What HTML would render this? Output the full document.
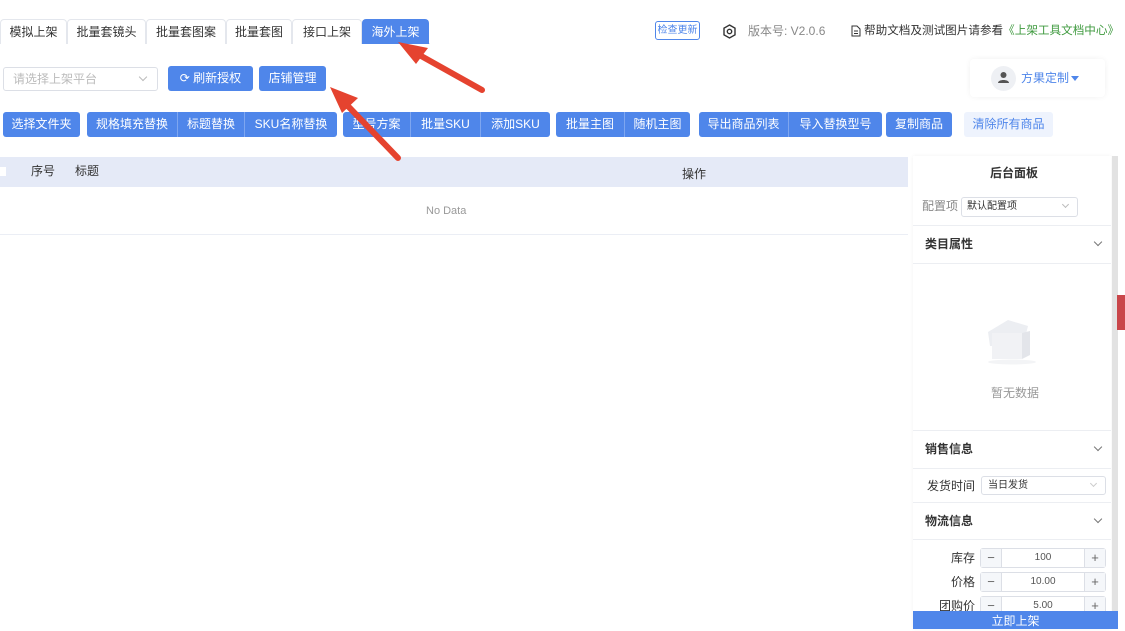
<!DOCTYPE html>
<html><head><meta charset="utf-8"><style>
*{box-sizing:border-box;margin:0;padding:0}
body{width:1125px;height:629px;overflow:hidden;background:#fff;font-family:"Liberation Sans","Noto Sans CJK SC",sans-serif;font-size:12px;line-height:1.2;color:#333;position:relative;white-space:nowrap}
.a{position:absolute}
.tab{position:absolute;top:19px;height:25px;line-height:25px;text-align:center;border:1px solid #e4e7ed;border-bottom:none;border-radius:4px 4px 0 0;color:#333;background:#fff}
.btn{position:absolute;height:25px;line-height:25px;text-align:center;background:#4f86ea;color:#fff;border-radius:3px}
.grp{position:absolute;top:112px;height:25px;display:flex;border-radius:3px;overflow:hidden}
.grp div{background:#4f86ea;color:#fff;line-height:25px;text-align:center;border-right:1px solid #7ea6f0}
.grp div:last-child{border-right:none}
.line{position:absolute;left:913px;width:198px;height:1px;background:#eceef2}
.sec{position:absolute;left:925px;font-weight:bold;color:#333;line-height:14px}
.chev{position:absolute;left:1095px;width:6px;height:6px;border-right:1px solid #777;border-bottom:1px solid #777;transform:rotate(45deg)}
.num{position:absolute;left:980px;width:126px;height:20px;border:1px solid #dcdfe6;border-radius:3px;display:flex;font-size:10px;color:#555}
.num span{width:20px;text-align:center;line-height:18px;background:#f5f7fa;color:#666;font-size:13px}
.num b{flex:1;text-align:center;font-weight:normal;line-height:18px;border-left:1px solid #dcdfe6;border-right:1px solid #dcdfe6}
.lab{position:absolute;width:60px;left:915px;text-align:right;color:#333;line-height:14px}
</style></head><body>
<div class="a" style="left:0;top:43px;width:430px;height:1px;background:#e4e7ed"></div>
<div class="tab" style="left:0;width:67px">模拟上架</div>
<div class="tab" style="left:67px;width:79px">批量套镜头</div>
<div class="tab" style="left:146px;width:80px">批量套图案</div>
<div class="tab" style="left:226px;width:66px">批量套图</div>
<div class="tab" style="left:292px;width:70px">接口上架</div>
<div class="tab" style="left:362px;width:67px;background:#4f86ea;color:#fff;border-color:#4f86ea">海外上架</div>

<div class="a" style="left:655px;top:21px;width:45px;height:19px;border:1px solid #4f86ea;border-radius:3px;color:#4f86ea;font-size:10px;text-align:center;line-height:17px">检查更新</div>
<svg class="a" style="left:722px;top:24px" width="15" height="15" viewBox="0 0 15 15"><polygon points="7.5,1 13,4.2 13,10.8 7.5,14 2,10.8 2,4.2" fill="none" stroke="#333" stroke-width="1.4"/><circle cx="7.5" cy="7.5" r="2.2" fill="none" stroke="#333" stroke-width="1.4"/></svg>
<div class="a" style="left:748px;top:24px;color:#888;font-size:12px">版本号: V2.0.6</div>
<svg class="a" style="left:851px;top:25px" width="10" height="12" viewBox="0 0 10 12"><path d="M1 1h5l3 3v7H1z" fill="none" stroke="#333"/><path d="M3 6h4M3 8.5h4" stroke="#333"/></svg>
<div class="a" style="left:864px;top:24px;color:#333;font-size:11.6px">帮助文档及测试图片请参看<span style="color:#3f9a3f">《上架工具文档中心》</span></div>

<div class="a" style="left:3px;top:67px;width:155px;height:24px;border:1px solid #dcdfe6;border-radius:3px;color:#bbb;line-height:22px;padding-left:9px">请选择上架平台</div>
<div class="a" style="left:140px;top:74px;width:6px;height:6px;border-right:1px solid #bbb;border-bottom:1px solid #bbb;transform:rotate(45deg)"></div>
<div class="btn" style="left:168px;top:66px;width:85px">⟳ 刷新授权</div>
<div class="btn" style="left:259px;top:66px;width:67px">店铺管理</div>

<div class="a" style="left:970px;top:59px;width:135px;height:38px;background:#fff;box-shadow:0 0 6px rgba(0,0,0,.06);border-radius:4px"></div>
<div class="a" style="left:991px;top:66px;width:25px;height:25px;border-radius:50%;background:#eef0f4"></div>
<svg class="a" style="left:997px;top:71px" width="13" height="13" viewBox="0 0 13 13"><circle cx="6.5" cy="4" r="3" fill="#555"/><path d="M1 12c0-4 11-4 11 0z" fill="#555"/></svg>
<div class="a" style="left:1021px;top:71px;color:#4f86ea">方果定制</div>
<div class="a" style="left:1071px;top:76px;border-left:4px solid transparent;border-right:4px solid transparent;border-top:5px solid #4f86ea"></div>

<div class="btn" style="left:3px;top:112px;width:77px">选择文件夹</div>
<div class="grp" style="left:87px"><div style="width:91px">规格填充替换</div><div style="width:67px">标题替换</div><div style="width:92px">SKU名称替换</div></div>
<div class="grp" style="left:343px"><div style="width:68px">型号方案</div><div style="width:70px">批量SKU</div><div style="width:69px">添加SKU</div></div>
<div class="grp" style="left:556px"><div style="width:69px">批量主图</div><div style="width:65px">随机主图</div></div>
<div class="grp" style="left:699px"><div style="width:90px">导出商品列表</div><div style="width:93px">导入替换型号</div></div>
<div class="btn" style="left:886px;top:112px;width:66px">复制商品</div>
<div class="a" style="left:964px;top:112px;width:89px;height:25px;line-height:25px;text-align:center;background:#eef3fd;color:#4f86ea;border-radius:3px">清除所有商品</div>

<div class="a" style="left:0;top:157px;width:908px;height:30px;background:#e5eaf7"></div>
<div class="a" style="left:0;top:167px;width:6px;height:9px;background:#fff"></div>
<div class="a" style="left:31px;top:164px">序号</div>
<div class="a" style="left:75px;top:164px">标题</div>
<div class="a" style="left:682px;top:167px">操作</div>
<div class="a" style="left:426px;top:205px;color:#999;font-size:11px">No Data</div>
<div class="a" style="left:0;top:234px;width:908px;height:1px;background:#ebeef5"></div>

<div class="a" style="left:913px;top:156px;width:198px;height:473px;background:#fff;box-shadow:0 0 4px rgba(0,0,0,.05)"></div>
<div class="a" style="left:1112px;top:156px;width:6px;height:460px;background:#e2e2e2"></div>
<div class="a" style="left:1117px;top:295px;width:8px;height:35px;background:#c9464a"></div>
<div class="a" style="left:990px;top:166px;font-weight:bold;font-size:12px">后台面板</div>
<div class="a" style="left:922px;top:199px;color:#888">配置项</div>
<div class="a" style="left:961px;top:197px;width:117px;height:20px;border:1px solid #dcdfe6;border-radius:3px;font-size:10px;line-height:18px;padding-left:5px;color:#333">默认配置项</div>
<div class="a" style="left:1063px;top:202px;width:5px;height:5px;border-right:1px solid #bbb;border-bottom:1px solid #bbb;transform:rotate(45deg)"></div>
<div class="line" style="top:225px"></div>
<div class="sec" style="top:237px">类目属性</div><div class="chev" style="top:239px"></div>
<div class="line" style="top:263px"></div>
<svg class="a" style="left:980px;top:305px" width="65" height="65" viewBox="0 0 65 65"><path d="M8 27l20-12 20 6-5 20H10z" fill="#eceef2"/><path d="M12 28h30v26H12z" fill="#f1f2f5"/><path d="M42 28l8-2v24l-8 4z" fill="#e3e5ea"/><ellipse cx="32" cy="57" rx="24" ry="2.5" fill="#f3f4f6"/></svg>
<div class="a" style="left:991px;top:386px;color:#999">暂无数据</div>
<div class="line" style="top:430px"></div>
<div class="sec" style="top:442px">销售信息</div><div class="chev" style="top:444px"></div>
<div class="line" style="top:468px"></div>
<div class="lab" style="top:479px">发货时间</div>
<div class="a" style="left:981px;top:476px;width:125px;height:19px;border:1px solid #dcdfe6;border-radius:3px;font-size:10px;line-height:17px;padding-left:6px">当日发货</div>
<div class="a" style="left:1091px;top:481px;width:5px;height:5px;border-right:1px solid #ccc;border-bottom:1px solid #ccc;transform:rotate(45deg)"></div>
<div class="line" style="top:502px"></div>
<div class="sec" style="top:514px">物流信息</div><div class="chev" style="top:516px"></div>
<div class="line" style="top:539px"></div>
<div class="lab" style="top:551px">库存</div><div class="num" style="top:548px"><span>−</span><b>100</b><span>+</span></div>
<div class="lab" style="top:575px">价格</div><div class="num" style="top:572px"><span>−</span><b>10.00</b><span>+</span></div>
<div class="lab" style="top:599px">团购价</div><div class="num" style="top:596px"><span>−</span><b>5.00</b><span>+</span></div>
<div class="a" style="left:913px;top:611px;width:205px;height:18px;background:#4f86ea;color:#fff;text-align:center;line-height:20px;font-size:12px">立即上架</div>

<svg class="a" style="left:0;top:0" width="1125" height="629">
<line x1="482" y1="90" x2="414" y2="52" stroke="#e5432f" stroke-width="6" stroke-linecap="round"/>
<polygon points="398,42 428,48 416,64" fill="#e5432f"/>
<line x1="398" y1="158" x2="345" y2="103" stroke="#e5432f" stroke-width="6" stroke-linecap="round"/>
<polygon points="330,87 358,98 342,113" fill="#e5432f"/>
</svg>
</body></html>
